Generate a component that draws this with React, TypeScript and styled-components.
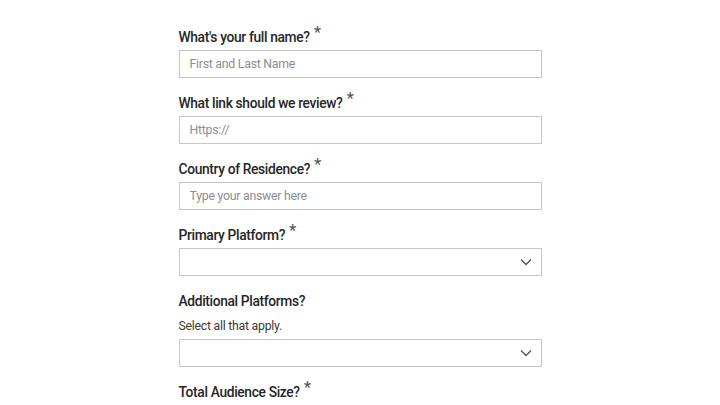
import React from "react";
import styled, { createGlobalStyle } from "styled-components";

const Global = createGlobalStyle`
  html, body { margin: 0; padding: 0; background: #ffffff; }
  body { font-family: Roboto, "Noto Sans", sans-serif; color: #262626; }
`;

const Form = styled.form`
  width: 363px;
  margin: 0 auto;
  padding-top: 27px;
  display: flex;
  flex-direction: column;
  gap: 15px;
`;

const Field = styled.div`
  display: flex;
  flex-direction: column;
`;

const Label = styled.label`
  font-size: 13.8px;
  font-weight: 500;
  letter-spacing: -0.35px;
  line-height: 20px;
  height: 20px;
  color: #262626;
  margin-bottom: 3px;
  white-space: nowrap;
`;

const Star = styled.span`
  display: inline-block;
  font-size: 17px;
  font-weight: 400;
  color: #525252;
  margin-left: 4px;
  position: relative;
  top: -4px;
  line-height: 10px;
`;

const Helper = styled.div`
  font-size: 12.3px;
  letter-spacing: -0.25px;
  line-height: 20px;
  color: #393939;
  margin: 2px 0 3px;
`;

const Input = styled.input`
  box-sizing: border-box;
  width: 100%;
  height: 28px;
  border: 1px solid #c6c6c6;
  border-radius: 0;
  padding: 0 10px;
  font-family: inherit;
  font-size: 12.3px;
  letter-spacing: -0.25px;
  color: #262626;
  outline: none;
  background: #fff;
  &::placeholder { color: #8d8d8d; }
`;

const Select = styled.div`
  box-sizing: border-box;
  width: 100%;
  height: 28px;
  border: 1px solid #c6c6c6;
  display: flex;
  align-items: center;
  justify-content: flex-end;
  padding-right: 9px;
  background: #fff;
`;

const Chevron = () => (
  <svg width="12" height="8" viewBox="0 0 12 8" fill="none">
    <path d="M1 1.5 L6 6.5 L11 1.5" stroke="#525252" strokeWidth="1.3" />
  </svg>
);

const fields: { label: string; required: boolean; type: "input" | "select"; placeholder?: string; helper?: string }[] = [
  { label: "What's your full name?", required: true, type: "input", placeholder: "First and Last Name" },
  { label: "What link should we review?", required: true, type: "input", placeholder: "Https://" },
  { label: "Country of Residence?", required: true, type: "input", placeholder: "Type your answer here" },
  { label: "Primary Platform?", required: true, type: "select" },
  { label: "Additional Platforms?", required: false, type: "select", helper: "Select all that apply." },
  { label: "Total Audience Size?", required: true, type: "input", placeholder: "" },
];

export default function App() {
  return (
    <>
      <Global />
      <Form onSubmit={(e) => e.preventDefault()}>
        {fields.map((f, i) => (
          <Field key={i}>
            <Label>
              {f.label}
              {f.required && <Star>*</Star>}
            </Label>
            {f.helper && <Helper>{f.helper}</Helper>}
            {f.type === "input" ? (
              <Input placeholder={f.placeholder} />
            ) : (
              <Select>
                <Chevron />
              </Select>
            )}
          </Field>
        ))}
      </Form>
    </>
  );
}
